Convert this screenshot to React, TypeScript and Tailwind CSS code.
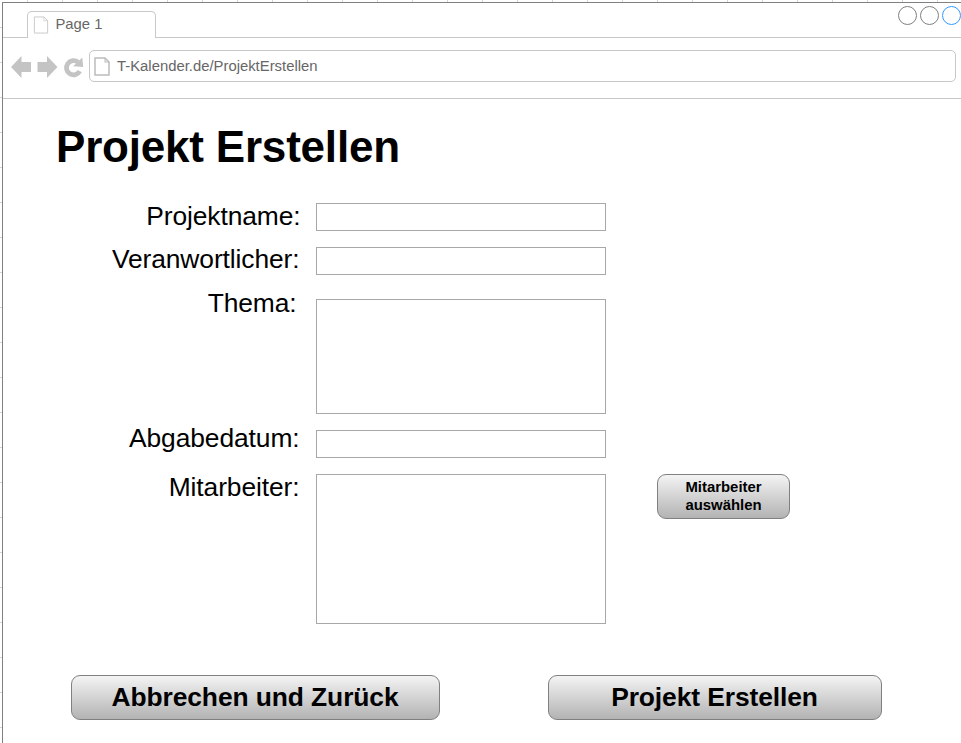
import React from 'react';

type FieldProps = { label: string; row: string; labelClass: string; boxClass: string; children?: React.ReactNode };

function Field({ label, row, labelClass, boxClass, children }: FieldProps) {
  return (
    <div className={`flex items-start ${row}`}>
      <label className={`shrink-0 text-right whitespace-nowrap text-[26.4px] leading-[30px] tracking-[-0.1px] ${labelClass}`}>{label}</label>
      <div className="grow" />
      <div className={`w-[290px] shrink-0 border border-[#a8a8a8] bg-white ${boxClass}`} />
      <div className="flex w-[355px] shrink-0 pl-[51px]">{children}</div>
    </div>
  );
}

function Button({ className, children }: { className: string; children: React.ReactNode }) {
  return (
    <button
      className={`flex h-[45px] items-center justify-center rounded-[9px] border border-[#808080] bg-linear-to-b from-[#f4f4f4] to-[#b3b3b3] font-bold text-black ${className}`}
    >
      {children}
    </button>
  );
}

function PageIcon({ className, color, sw }: { className: string; color: string; sw: number }) {
  return (
    <svg className={className} viewBox="0 0 16 19" fill="none" stroke={color} strokeWidth={sw}>
      <path d="M1 1H11L15 5V18H1Z" />
      <path d="M11 1V5H15" strokeWidth={sw * 0.7} />
    </svg>
  );
}

export default function App() {
  return (
    <div className="h-[743px] w-[961px] overflow-hidden bg-white bg-[repeating-linear-gradient(90deg,transparent_0_27px,#d4d4d4_27px_28px,transparent_28px_35px),repeating-linear-gradient(180deg,transparent_0_27px,#d4d4d4_27px_28px,transparent_28px_35px)] pt-[2px] pl-[2px] font-['Liberation_Sans',Arial,sans-serif] text-black">
      <div className="h-[741px] w-[959px] border-t border-l border-[#808080] bg-white">
        <div className="flex h-[35px]">
          <div className="w-[24px] border-b border-[#c8c8c8]" />
          <div className="flex h-[35px] w-[129px] items-end">
            <div className="flex h-[27px] w-full items-center rounded-t-[5px] border-x border-t border-[#c8c8c8] pb-px pl-[5px]">
              <PageIcon className="h-[18px] w-[16px]" color="#c8c8c8" sw={1} />
              <span className="ml-[6.5px] text-[14.8px] text-[#666666]">Page 1</span>
            </div>
          </div>
          <div className="flex grow justify-end gap-[3px] border-b border-[#c8c8c8] pt-[3px]">
            <div className="size-[19px] rounded-full border border-[#808080]" />
            <div className="size-[19px] rounded-full border border-[#808080]" />
            <div className="size-[19px] rounded-full border border-[#3399ff]" />
          </div>
        </div>
        <div className="flex h-[61px] items-start border-b border-[#c8c8c8] pt-[12px]">
          <svg className="h-[30px] w-[86px] shrink-0" viewBox="3 50 86 30" fill="#c4c4c4">
            <path d="M11 67L21.5 56V62H31V72H21.5V78Z" />
            <path d="M57.5 67L47 56V62H37.5V72H47V78Z" />
            <path d="M79.8 71.2A7.1 7.1 0 1 1 78 62.2" fill="none" stroke="#c4c4c4" strokeWidth="4.8" />
            <path d="M82.3 57.6L83.2 67L73.2 66.2Z" />
          </svg>
          <div className="flex h-[32px] w-[867px] items-center rounded-[5px] border border-[#c8c8c8] pl-[4px]">
            <PageIcon className="h-[19px] w-[16px]" color="#bcbcbc" sw={1.5} />
            <span className="ml-[7px] text-[14.85px] text-[#666666]">T-Kalender.de/ProjektErstellen</span>
          </div>
        </div>
        <main>
          <h1 className="mt-[23px] ml-[53px] h-[49px] text-[44px] leading-[50px] font-bold tracking-[-0.2px]">Projekt Erstellen</h1>
          <div className="mt-[30px] flex flex-col">
            <Field label="Projektname:" row="h-[43px]" labelClass="w-[297.5px]" boxClass="mt-[2px] h-[28px]" />
            <Field label="Veranwortlicher:" row="h-[44px]" labelClass="w-[296.5px]" boxClass="mt-[3px] h-[28px]" />
            <Field label="Thema:" row="h-[135px]" labelClass="w-[293.5px]" boxClass="mt-[11px] h-[115px]" />
            <Field label="Abgabedatum:" row="h-[49px]" labelClass="w-[296.5px]" boxClass="mt-[7px] h-[28px]" />
            <Field label="Mitarbeiter:" row="h-[152px]" labelClass="w-[296.5px]" boxClass="mt-[2px] h-[150px]">
              <Button className="mt-[2px] w-[133px] pb-px text-[14.9px] leading-[18px]">
                <span>Mitarbeiter<br />auswählen</span>
              </Button>
            </Field>
          </div>
          <div className="mt-[51px] ml-[68px] flex gap-[108px]">
            <Button className="w-[369px] pr-[1px] pb-[2px] text-[26.4px] leading-[30px] tracking-[-0.09px]">Abbrechen und Zurück</Button>
            <Button className="w-[334px] pr-[1px] pb-[2px] text-[26.4px] leading-[30px] tracking-[-0.09px]">Projekt Erstellen</Button>
          </div>
        </main>
      </div>
    </div>
  );
}
